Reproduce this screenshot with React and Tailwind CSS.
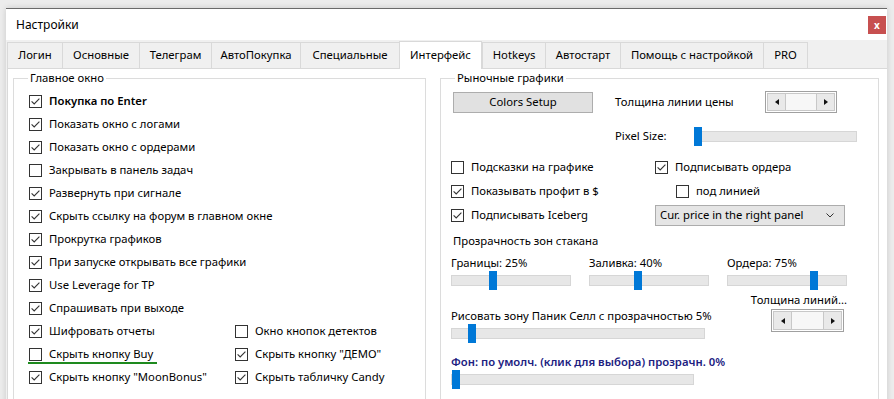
import React from 'react';

const TABS = [
  { label: 'Логин', w: 'w-[55px]' },
  { label: 'Основные', w: 'w-[77px]' },
  { label: 'Телеграм', w: 'w-[72px]' },
  { label: 'АвтоПокупка', w: 'w-[89px]' },
  { label: 'Специальные', w: 'w-[99px]' },
  { label: 'Интерфейс', w: 'w-[83px]', active: true },
  { label: 'Hotkeys', w: 'w-[63px]' },
  { label: 'Автостарт', w: 'w-[75px]' },
  { label: 'Помощь с настройкой', w: 'w-[143px]' },
  { label: 'PRO', w: 'w-[45px]' },
];

const MAIN_ROWS = [
  { label: 'Покупка по Enter', checked: true, bold: true },
  { label: 'Показать окно с логами', checked: true },
  { label: 'Показать окно с ордерами', checked: true },
  { label: 'Закрывать в панель задач', checked: false },
  { label: 'Развернуть при сигнале', checked: true },
  { label: 'Скрыть ссылку на форум в главном окне', checked: true },
  { label: 'Прокрутка графиков', checked: true },
  { label: 'При запуске открывать все графики', checked: true },
  { label: 'Use Leverage for TP', checked: true },
  { label: 'Спрашивать при выходе', checked: true },
];

const PAIRED_ROWS = [
  [{ label: 'Шифровать отчеты', checked: true }, { label: 'Окно кнопок детектов', checked: false }],
  [{ label: 'Скрыть кнопку Buy', checked: false, marked: true }, { label: 'Скрыть кнопку "ДЕМО"', checked: true }],
  [{ label: 'Скрыть кнопку "MoonBonus"', checked: true }, { label: 'Скрыть табличку Candy', checked: true }],
];

const Box = ({ checked }) => (
  <span className="w-[13px] h-[13px] border border-[#333333] bg-white flex items-center justify-center shrink-0">
    {checked && (
      <svg width="11" height="11" viewBox="0 0 11 11">
        <path d="M1.6 5.4 L4.2 8 L9.4 2.6" fill="none" stroke="#333333" strokeWidth="1.1" />
      </svg>
    )}
  </span>
);

const Check = ({ label, checked, bold, marked, h = 'h-[23px]' }) => (
  <div className={`relative ${h} flex items-center gap-[7px] whitespace-nowrap`}>
    <Box checked={checked} />
    <span className={bold ? 'font-semibold' : ''}>{label}</span>
    {marked && <span className="absolute left-[-1px] bottom-[2px] w-[129px] h-[2px] bg-[#1e8a1e]" />}
  </div>
);

const Spin = ({ w, h = 'h-[22px]' }) => (
  <div className={`${w} ${h} border border-[#a0a0a0] bg-white p-[1px]`}>
    <div className="h-full border border-[#c8c8c8] bg-[#f7f7f7] flex justify-between">
      <span className="w-[18px] h-full bg-[#e9e9e9] border-r border-[#c8c8c8] flex items-center justify-center">
        <svg width="4" height="6" viewBox="0 0 4 6"><path d="M4 0 L0 3 L4 6 Z" fill="#111" /></svg>
      </span>
      <span className="w-[18px] h-full bg-[#e9e9e9] border-l border-[#c8c8c8] flex items-center justify-center">
        <svg width="4" height="6" viewBox="0 0 4 6"><path d="M0 0 L4 3 L0 6 Z" fill="#111" /></svg>
      </span>
    </div>
  </div>
);

const Track = ({ w, thumb }) => (
  <div className={`relative ${w} h-[19px] flex items-center`}>
    <div className="w-full h-[11px] bg-[#e7e7e7] border border-[#d6d6d6]" />
    <span className={`absolute top-0 ${thumb} w-[8px] h-[19px] bg-[#0078d7]`} />
  </div>
);

const Slider = ({ label, w, thumb, strong }) => (
  <div className="flex flex-col">
    <div className={`h-[15px] flex items-center whitespace-nowrap ${strong ? 'font-semibold text-[#20207f]' : ''}`}>{label}</div>
    <Track w={w} thumb={thumb} />
  </div>
);

const Group = ({ title, className, children }) => (
  <div className={`relative border border-[#dcdcdc] h-[340px] shrink-0 ${className}`}>
    <span className="absolute top-[-9px] left-[14px] px-[2px] bg-white leading-[16px]">{title}</span>
    {children}
  </div>
);

export default function App() {
  return (
    <div className="w-[894px] h-[399px] overflow-hidden bg-[#ececec] pl-[6px] pt-[8px] text-[11.3px] text-black font-['Noto_Sans',sans-serif]">
      <div className="w-[881px] h-[400px] bg-[#f0f0f0] border-t border-[#6a6a6a] shadow-[0_0_6px_rgba(0,0,0,0.15)] flex flex-col">
        <div className="h-[31px] shrink-0 bg-white flex items-center justify-between pl-[10px] pr-[1px]">
          <span className="text-[12px]">Настройки</span>
          <span className="w-[18px] h-[18px] bg-[#c75050] text-white text-[10px] font-bold flex items-center justify-center leading-none">x</span>
        </div>

        <div className="h-[28px] shrink-0 flex items-end pl-[1px]">
          {TABS.map((t) =>
            t.active ? (
              <div key={t.label} className={`${t.w} h-[28px] bg-white border-t border-l border-r border-[#d9d9d9] flex items-center justify-center relative z-10 -mb-[1px]`}>
                {t.label}
              </div>
            ) : (
              <div key={t.label} className={`${t.w} h-[26px] bg-[#f0f0f0] border-t border-l border-[#d9d9d9] last:border-r flex items-center justify-center`}>
                {t.label}
              </div>
            )
          )}
        </div>

        <div className="flex-1 ml-[1px] bg-white border-t border-l border-[#d9d9d9] flex items-start pt-[9px]">
          <Group title="Главное окно" className="ml-[5px] w-[413px]">
            <div className="pl-[15px] pt-[11px]">
              {MAIN_ROWS.map((r) => (
                <Check key={r.label} {...r} />
              ))}
              {PAIRED_ROWS.map(([a, b]) => (
                <div key={a.label} className="grid grid-cols-[206px_1fr]">
                  <Check {...a} />
                  <Check {...b} />
                </div>
              ))}
            </div>
          </Group>

          <Group title="Рыночные графики" className="ml-[14px] w-[439px]">
            <div className="pl-[10px] pt-[12px] flex flex-col">
              <div className="h-[22px] flex items-center">
                <button className="ml-[2px] w-[140px] h-[21px] bg-[#e1e1e1] border border-[#adadad] flex items-center justify-center">
                  Colors Setup
                </button>
                <span className="ml-[22px] w-[150px]">Толщина линии цены</span>
                <Spin w="w-[72px]" />
              </div>

              <div className="mt-[14px] h-[19px] flex items-center">
                <span className="ml-[164px] w-[79px]">Pixel Size:</span>
                <Track w="w-[163px]" thumb="left-0" />
              </div>

              <div className="mt-[9px] grid grid-cols-[204px_1fr]">
                <Check label="Подсказки на графике" checked={false} h="h-[24px]" />
                <Check label="Подписывать ордера" checked h="h-[24px]" />
                <Check label="Показывать профит в $" checked h="h-[24px]" />
                <div className="pl-[21px]">
                  <Check label="под линией" checked={false} h="h-[24px]" />
                </div>
                <Check label="Подписывать Iceberg" checked h="h-[24px]" />
                <div className="h-[24px] flex items-center">
                  <div className="w-[190px] h-[21px] bg-[#e5e5e5] border border-[#acacac] flex items-center justify-between pl-[4px] pr-[10px]">
                    <span>Cur. price in the right panel</span>
                    <svg width="8" height="5" viewBox="0 0 8 5"><path d="M0.5 0.5 L4 4 L7.5 0.5" fill="none" stroke="#333" strokeWidth="1" /></svg>
                  </div>
                </div>
              </div>

              <div className="mt-[6px] h-[16px] flex items-center ml-[2px]">Прозрачность зон стакана</div>

              <div className="mt-[7px] flex gap-[18px]">
                <Slider label="Границы: 25%" w="w-[120px]" thumb="left-[38px]" />
                <Slider label="Заливка: 40%" w="w-[120px]" thumb="left-[45px]" />
                <Slider label="Ордера: 75%" w="w-[120px]" thumb="left-[83px]" />
              </div>

              <div className="flex items-start">
                <div className="w-[254px] shrink-0 pt-[19px]">
                  <Slider label="Рисовать зону Паник Селл с прозрачностью 5%" w="w-[254px]" thumb="left-[17px]" />
                </div>
                <div className="ml-[45px] w-[97px] shrink-0 pt-[2px] flex flex-col items-end">
                  <div className="h-[16px] flex items-center whitespace-nowrap">Толщина линий...</div>
                  <div className="mt-[1px] mr-[3px]">
                    <Spin w="w-[73px]" h="h-[23px]" />
                  </div>
                </div>
              </div>

              <div className="mt-[12px]">
                <Slider label="Фон: по умолч. (клик для выбора) прозрачн. 0%" w="w-[243px]" thumb="left-px" strong />
              </div>
            </div>
          </Group>
        </div>
      </div>
    </div>
  );
}
